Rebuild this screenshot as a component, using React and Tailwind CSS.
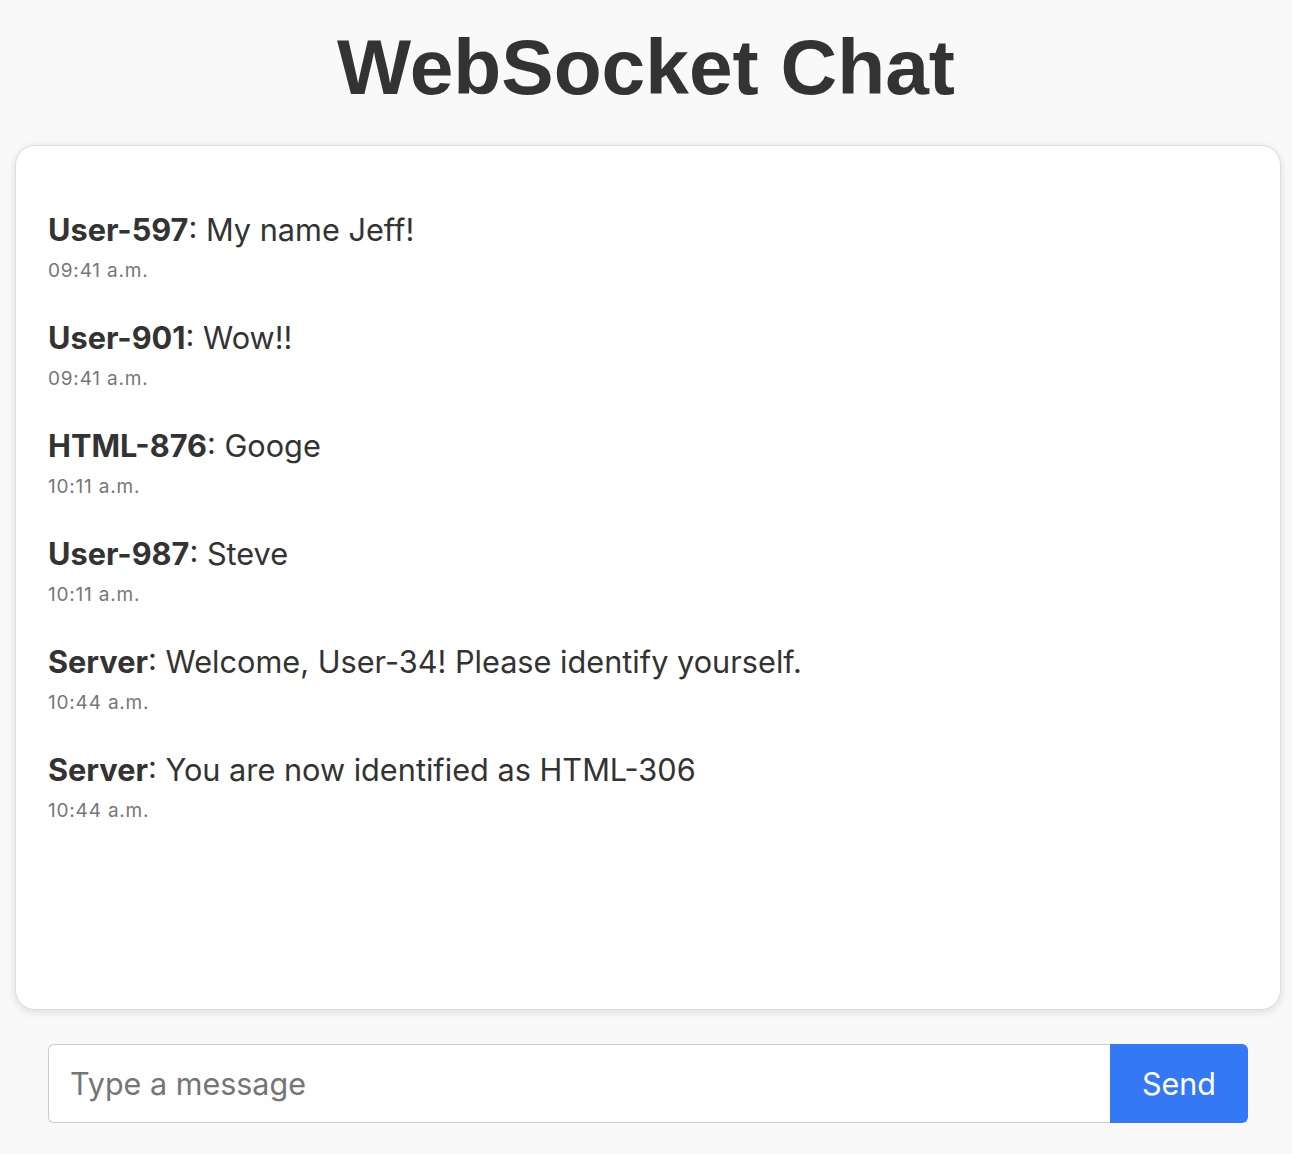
import React from "react";

const messages = [
  { name: "User-597", text: "My name Jeff!", time: "09:41 a.m." },
  { name: "User-901", text: "Wow!!", time: "09:41 a.m." },
  { name: "HTML-876", text: "Googe", time: "10:11 a.m." },
  { name: "User-987", text: "Steve", time: "10:11 a.m." },
  { name: "Server", text: "Welcome, User-34! Please identify yourself.", time: "10:44 a.m." },
  { name: "Server", text: "You are now identified as HTML-306", time: "10:44 a.m." },
];

export default function App() {
  return (
    <div
      className="min-h-[1154px] bg-[#f9f9f9] text-[#333333]"
      style={{ fontFamily: "Inter, 'Noto Sans', sans-serif" }}
    >
      <h1
        className="pt-[22px] text-center text-[78.5px] font-bold leading-[90px] text-[#333333]"
        style={{ fontFamily: "'Liberation Sans', Arial, sans-serif" }}
      >
        WebSocket Chat
      </h1>
      <div className="ml-[15px] mr-[11px] mt-[33px] h-[865px] rounded-[20px] border border-[#dddddd] bg-white pl-[32px] pt-[66px] shadow-[0_2px_8px_rgba(0,0,0,0.12)]">
        <div className="flex flex-col gap-[38px]">
          {messages.map((m, i) => (
            <div key={i} className="flex flex-col">
              <div className="text-[30.7px] leading-[36px] text-[#333333]">
                <span className="font-bold">{m.name}</span>: {m.text}
              </div>
              <div className="mt-[12px] text-[19px] leading-[22px] tracking-[0.8px] text-[#777777]">
                {m.time}
              </div>
            </div>
          ))}
        </div>
      </div>
      <div className="ml-[48px] mt-[34px] flex h-[79px] w-[1200px]">
        <input
          type="text"
          placeholder="Type a message"
          className="h-full flex-1 rounded-l-[6px] border border-r-0 border-[#cccccc] bg-white pl-[21px] text-[30.5px] text-[#333333] outline-none placeholder:text-[#757575]"
          style={{ fontFamily: "Inter, 'Noto Sans', sans-serif" }}
        />
        <button
          className="h-full w-[138px] rounded-r-[6px] bg-[#3478f6] text-[30.5px] text-white"
          style={{ fontFamily: "Inter, 'Noto Sans', sans-serif" }}
        >
          Send
        </button>
      </div>
    </div>
  );
}
